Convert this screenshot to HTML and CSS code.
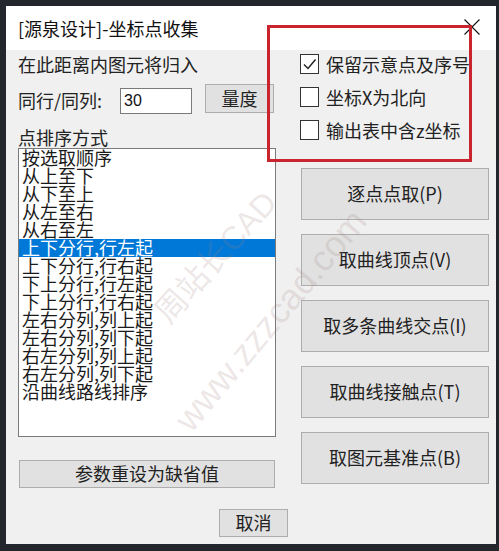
FILE: index.html
```html
<!DOCTYPE html>
<html lang="zh-CN">
<head>
<meta charset="utf-8">
<title>坐标点收集</title>
<link rel="stylesheet" href="styles.css">
</head>
<body>
<div class="dialog">
  <div class="titlebar">
    <span class="title">[源泉设计]-坐标点收集</span>
    <svg class="close" width="16" height="16" viewBox="0 0 16 16"><path d="M0.5 0.5 L15.5 15.5 M15.5 0.5 L0.5 15.5" stroke="#111" stroke-width="1.1" fill="none"/></svg>
  </div>
  <div class="body">
    <div class="columns">
      <div class="left">
        <div class="label l1">在此距离内图元将归入</div>
        <div class="row">
          <span class="label rowlabel">同行/同列:</span>
          <div class="input">30</div>
          <div class="btn measure">量度</div>
        </div>
        <div class="label l3">点排序方式</div>
        <ul class="list">
          <li>按选取顺序</li>
          <li>从上至下</li>
          <li>从下至上</li>
          <li>从左至右</li>
          <li>从右至左</li>
          <li class="selected">上下分行,行左起</li>
          <li>上下分行,行右起</li>
          <li>下上分行,行左起</li>
          <li>下上分行,行右起</li>
          <li>左右分列,列上起</li>
          <li>左右分列,列下起</li>
          <li>右左分列,列上起</li>
          <li>右左分列,列下起</li>
          <li>沿曲线路线排序</li>
        </ul>
        <div class="btn wide">参数重设为缺省值</div>
      </div>
      <div class="right">
        <div class="checks">
          <div class="check">
            <span class="box"><svg width="19" height="20" viewBox="0 0 19 20"><path d="M4 10.5 L8 14.5 L15.5 5.5" stroke="#222" stroke-width="1.5" fill="none"/></svg></span>
            <span class="ctext">保留示意点及序号</span>
          </div>
          <div class="check">
            <span class="box"></span>
            <span class="ctext">坐标X为北向</span>
          </div>
          <div class="check">
            <span class="box"></span>
            <span class="ctext">输出表中含z坐标</span>
          </div>
        </div>
        <div class="actions">
          <div class="btn big">逐点点取(P)</div>
          <div class="btn big">取曲线顶点(V)</div>
          <div class="btn big">取多条曲线交点(I)</div>
          <div class="btn big">取曲线接触点(T)</div>
          <div class="btn big">取图元基准点(B)</div>
        </div>
      </div>
    </div>
    <div class="footer">
      <div class="btn cancel">取消</div>
    </div>
  </div>
  <div class="highlight"></div>
  <div class="wm wm1">周站长CAD</div>
  <div class="wm wm2">www.zzzcad.com</div>
</div>
</body>
</html>
```
FILE: styles.css
```css
html, body {
  margin: 0;
  padding: 0;
}
body {
  width: 499px;
  height: 551px;
  overflow: hidden;
  background: #23272d;
  font-family: "Noto Sans CJK SC", "Noto Sans", sans-serif;
  color: #222;
}
.dialog {
  position: relative;
  margin: 6px 0 0 6px;
  width: 490px;
  height: 538px;
  display: flex;
  flex-direction: column;
  overflow: hidden;
}
.titlebar {
  height: 44px;
  flex: none;
  background: #fff;
  display: flex;
  align-items: center;
  justify-content: space-between;
  padding: 0 16px 0 12px;
}
.title {
  font-size: 18px;
  line-height: 22px;
  color: #111;
}
.close {
  display: block;
  margin-top: -3px;
}
.body {
  flex: 1;
  background: #f0f0f0;
  padding: 0 7px 0 12px;
}
.columns {
  display: flex;
  gap: 24px;
}
.left {
  width: 258px;
  display: flex;
  flex-direction: column;
}
.right {
  width: 189px;
  padding-top: 4px;
}
.label {
  font-size: 18px;
  line-height: 22px;
  color: #222;
}
.l1 {
  margin-top: 3px;
}
.row {
  display: flex;
  align-items: flex-start;
  margin-top: 9px;
}
.rowlabel {
  width: 102px;
  margin-top: 5px;
}
.input {
  width: 70px;
  height: 24px;
  margin-top: 4px;
  background: #fff;
  border: 1px solid #7a7a7a;
  font-family: "Liberation Sans", "Noto Sans", sans-serif;
  font-size: 16px;
  line-height: 24px;
  padding-left: 3px;
  box-sizing: content-box;
  width: 67px;
  color: #111;
}
.btn {
  background: #e1e1e1;
  border: 1px solid #adadad;
  box-sizing: border-box;
  display: flex;
  align-items: center;
  justify-content: center;
  font-size: 18px;
  color: #222;
}
.measure {
  width: 69px;
  height: 29px;
  margin-left: 13px;
  padding-bottom: 2px;
}
.l3 {
  margin-top: 13px;
  line-height: 21px;
}
.list {
  list-style: none;
  margin: 0;
  padding: 0;
  height: 289px;
  box-sizing: border-box;
  border: 1px solid #7a7a7a;
  background: #fff;
}
.list li {
  height: 18px;
  line-height: 16px;
  font-size: 18px;
  padding-left: 3px;
  color: #1a1a1a;
  white-space: nowrap;
}
.list li.selected {
  background: #0078d7;
  color: #fff;
}
.wide {
  margin: 23px 1px 0 1px;
  height: 28px;
  padding-bottom: 2px;
}
.checks {
  display: flex;
  flex-direction: column;
  gap: 13px;
}
.check {
  display: flex;
  align-items: center;
  height: 20px;
  gap: 7px;
}
.box {
  width: 19px;
  height: 20px;
  box-sizing: border-box;
  border: 1px solid #333;
  background: #fff;
  display: block;
  position: relative;
}
.box svg {
  display: block;
  margin: -1px 0 0 -1px;
}
.ctext {
  font-size: 18px;
  line-height: 20px;
  color: #222;
  padding-bottom: 1px;
}
.actions {
  margin-top: 28px;
  display: flex;
  flex-direction: column;
  gap: 14px;
  padding-left: 1px;
}
.big {
  width: 188px;
  height: 52px;
  padding-bottom: 2px;
}
.footer {
  display: flex;
  justify-content: center;
  margin-top: 21px;
}
.cancel {
  width: 69px;
  height: 28px;
  padding-bottom: 2px;
}
.highlight {
  position: absolute;
  left: 261px;
  top: 19px;
  width: 205px;
  height: 137px;
  box-sizing: border-box;
  border: 3px solid #c9252f;
  pointer-events: none;
}
.wm {
  position: absolute;
  transform-origin: 0 50%;
  white-space: nowrap;
  pointer-events: none;
  color: rgba(160, 130, 130, 0.2);
  font-family: "Liberation Sans", "Noto Sans CJK SC", sans-serif;
}
.wm1 {
  left: 155px;
  top: 292px;
  font-size: 32px;
  line-height: 40px;
  transform: rotate(-48deg);
}
.wm2 {
  left: 176px;
  top: 400px;
  font-size: 36px;
  line-height: 40px;
  transform: rotate(-50deg);
}
```
